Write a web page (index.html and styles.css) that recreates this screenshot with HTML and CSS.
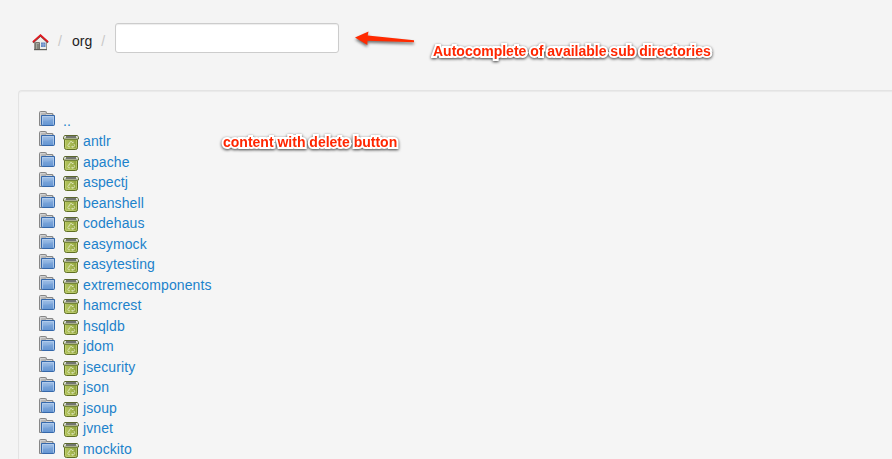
FILE: index.html
```
<!DOCTYPE html>
<html lang="en">
<head>
<meta charset="utf-8">
<title>org</title>
<link rel="stylesheet" href="styles.css">
</head>
<body>
<svg class="sprite" aria-hidden="true">
  <defs>
    <linearGradient id="blue" x1="0" y1="0" x2="0" y2="1"><stop offset="0" stop-color="#a3c2e8"/><stop offset="1" stop-color="#6696d2"/></linearGradient>
    <linearGradient id="gray" x1="0" y1="0" x2="1" y2="1"><stop offset="0" stop-color="#c4c4c4"/><stop offset="1" stop-color="#858585"/></linearGradient>
    <linearGradient id="green" x1="0" y1="0" x2="1" y2="0"><stop offset="0" stop-color="#b3c35c"/><stop offset=".5" stop-color="#a5b850"/><stop offset="1" stop-color="#899b38"/></linearGradient>
  </defs>
  <symbol id="folder" viewBox="0 0 16 16">
    <path d="M.5 14.500V1.500q0-1 1-1h5q1 0 1 1v1h6q.5 0 .5.5v11.500z" fill="url(#gray)" stroke="#868686"/>
    <path d="M1.500 14V1.500h4.700M7 3.500h6" fill="none" stroke="#d2d2d2"/>
    <path d="M2.500 4.500h13v9q0 1-1 1h-11q-1 0-1-1z" fill="url(#blue)" stroke="#3568ab"/>
    <path d="M3.500 13.500v-8h11v8" fill="none" stroke="#b9d0ed" stroke-opacity=".7"/>
    <path d="M4 10q6 0 10-2v6H4z" fill="#5f91d0" fill-opacity=".3"/>
  </symbol>
  <symbol id="bin" viewBox="0 0 16 15">
    <path d="M1.500 4.500h13v8q0 2-2 2h-9q-2 0-2-2z" fill="url(#green)" stroke="#5f6f24"/>
    <path d="M2.500 5v7.500q0 1 1 1h9q1 0 1-1V5" fill="none" stroke="#c3d175" stroke-opacity=".7"/>
    <path d="M2 .5h12q.8 0 1 .8l.5 1.700v1H.5v-1L1 1.300q.2-.8 1-.8z" fill="#f3f4ee" stroke="#5c682e"/>
    <path d="M3 1h10l.5 2h-11z" fill="#73766f"/>
    <path d="M1 4.500h14" stroke="#75853a"/>
    <g transform="translate(0 -.9)">
      <path d="m6.300 9.300 1.100-1.800h1.400l1 1.500M11 10l.7 1.500-.8 1.200H9M7 12.700H5.500l-.7-1.200.8-1.500" fill="none" stroke="#e0e7be" stroke-width=".9"/>
      <path d="M9 9h1.500V7.500zM5 9.200h1.700l.6 1.500zM9.500 11.500v2.400l-1.300-1.200z" fill="#e0e7be"/>
    </g>
  </symbol>
  <symbol id="home" viewBox="0 0 17 17">
    <path d="M2.500 7.500 8.500 2.500l6 5v8h-12z" fill="#eeeeea" stroke="#94958e"/>
    <path d="M3.500 15.500V8.500h4v7z" fill="#a5a59b" stroke="#77776f"/>
    <path d="M5 15V10h2v5z" fill="#85857c"/>
    <path d="M9 8.500h4.500V13H9z" fill="#6389c3"/>
    <path d="M11.250 8.500V13M9 10.750h4.500" stroke="#a8bfe0" stroke-width=".5"/>
    <path d="M2 15.700h13" stroke="#55564f"/>
    <path d="M.9 8.500 8.500 1.700l7.600 6.800" fill="none" stroke="#88413f" stroke-width="1.800"/>
    <path d="M1 7.800 8.500 1.100 16 7.800" fill="none" stroke="#e51820" stroke-width="1.500"/>
  </symbol>
</svg>

<nav class="breadcrumb">
  <svg class="home"><use href="#home"/></svg>
  <span class="divider">/</span>
  <span class="crumb">org</span>
  <span class="divider last">/</span>
  <input class="path" type="text" aria-label="Directory">
</nav>

<main class="well">
  <ul class="listing">
    <li><svg><use href="#folder"/></svg><a class="up">..</a></li>
    <li><svg><use href="#folder"/></svg><svg class="bin"><use href="#bin"/></svg><a>antlr</a></li>
    <li><svg><use href="#folder"/></svg><svg class="bin"><use href="#bin"/></svg><a>apache</a></li>
    <li><svg><use href="#folder"/></svg><svg class="bin"><use href="#bin"/></svg><a>aspectj</a></li>
    <li><svg><use href="#folder"/></svg><svg class="bin"><use href="#bin"/></svg><a>beanshell</a></li>
    <li><svg><use href="#folder"/></svg><svg class="bin"><use href="#bin"/></svg><a>codehaus</a></li>
    <li><svg><use href="#folder"/></svg><svg class="bin"><use href="#bin"/></svg><a>easymock</a></li>
    <li><svg><use href="#folder"/></svg><svg class="bin"><use href="#bin"/></svg><a>easytesting</a></li>
    <li><svg><use href="#folder"/></svg><svg class="bin"><use href="#bin"/></svg><a>extremecomponents</a></li>
    <li><svg><use href="#folder"/></svg><svg class="bin"><use href="#bin"/></svg><a>hamcrest</a></li>
    <li><svg><use href="#folder"/></svg><svg class="bin"><use href="#bin"/></svg><a>hsqldb</a></li>
    <li><svg><use href="#folder"/></svg><svg class="bin"><use href="#bin"/></svg><a>jdom</a></li>
    <li><svg><use href="#folder"/></svg><svg class="bin"><use href="#bin"/></svg><a>jsecurity</a></li>
    <li><svg><use href="#folder"/></svg><svg class="bin"><use href="#bin"/></svg><a>json</a></li>
    <li><svg><use href="#folder"/></svg><svg class="bin"><use href="#bin"/></svg><a>jsoup</a></li>
    <li><svg><use href="#folder"/></svg><svg class="bin"><use href="#bin"/></svg><a>jvnet</a></li>
    <li><svg><use href="#folder"/></svg><svg class="bin"><use href="#bin"/></svg><a>mockito</a></li>
  </ul>
</main>

<svg class="arrow" viewBox="0 0 70 24"><path d="M5 7.500 18.500 1.500l-.8 4L64 10.300v2L17.500 10.800l-.2 4.200z" fill="#ff2a00"/></svg>
<div class="note note-path">Autocomplete of available sub directories</div>
<div class="note note-content">content with delete button</div>
</body>
</html>
```

FILE: styles.css
```
body {
  margin: 0;
  height: 459px;
  overflow: hidden;
  background: #f4f4f4;
  color: #222;
  font: 14px/20px "Liberation Sans", Arial, sans-serif;
}

.sprite {
  position: absolute;
  width: 0;
  height: 0;
}

.breadcrumb {
  display: flex;
  align-items: center;
  height: 30px;
  padding: 23px 0 37px 32px;
}

.home {
  width: 17px;
  height: 17px;
  margin: 8px 9px 0 0;
}

.breadcrumb span {
  margin-top: 6px;
}

.divider {
  width: 4px;
  color: #c8c8c8;
}

.breadcrumb .crumb {
  margin: 6px 9px 0 10px;
}

.last {
  margin-right: 10px;
}

.path {
  box-sizing: border-box;
  width: 224px;
  height: 30px;
  padding: 4px 6px;
  border: 1px solid #ccc;
  border-radius: 3px;
  background: #fff;
  box-shadow: inset 0 1px 1px rgba(0, 0, 0, .075);
}

.well {
  box-sizing: border-box;
  height: 369px;
  overflow: hidden;
  margin: 0 0 0 18px;
  padding: 19.8px 20px 0;
  border: solid #e3e3e3;
  border-width: 1px 0 0 1px;
  border-radius: 4px 0 0 0;
  background: #f5f5f5;
  box-shadow: inset 0 1px 1px rgba(0, 0, 0, .05);
}

.listing {
  margin: 0;
  padding: 0;
  list-style: none;
}

.listing li {
  display: flex;
  align-items: flex-start;
  height: 20.5px;
}

.listing svg {
  flex: none;
  width: 16px;
  height: 16px;
  margin-right: 8px;
}

.listing .bin {
  height: 15px;
  margin: 4px 4px 0 0;
}

.listing a {
  color: #1c82cb;
  letter-spacing: .1px;
}

.arrow {
  position: absolute;
  left: 350px;
  top: 30px;
  width: 70px;
  height: 24px;
  filter: drop-shadow(0 2px 1.5px rgba(0, 0, 0, .55));
}

.note {
  position: absolute;
  color: #ff2600;
  font-weight: bold;
  white-space: nowrap;
  -webkit-text-stroke: 4px #fff;
  paint-order: stroke fill;
  filter: drop-shadow(0 1px 1.5px rgba(0, 0, 0, .75));
}

.note-path {
  left: 433px;
  top: 41px;
}

.note-content {
  left: 223px;
  top: 132px;
}
```
